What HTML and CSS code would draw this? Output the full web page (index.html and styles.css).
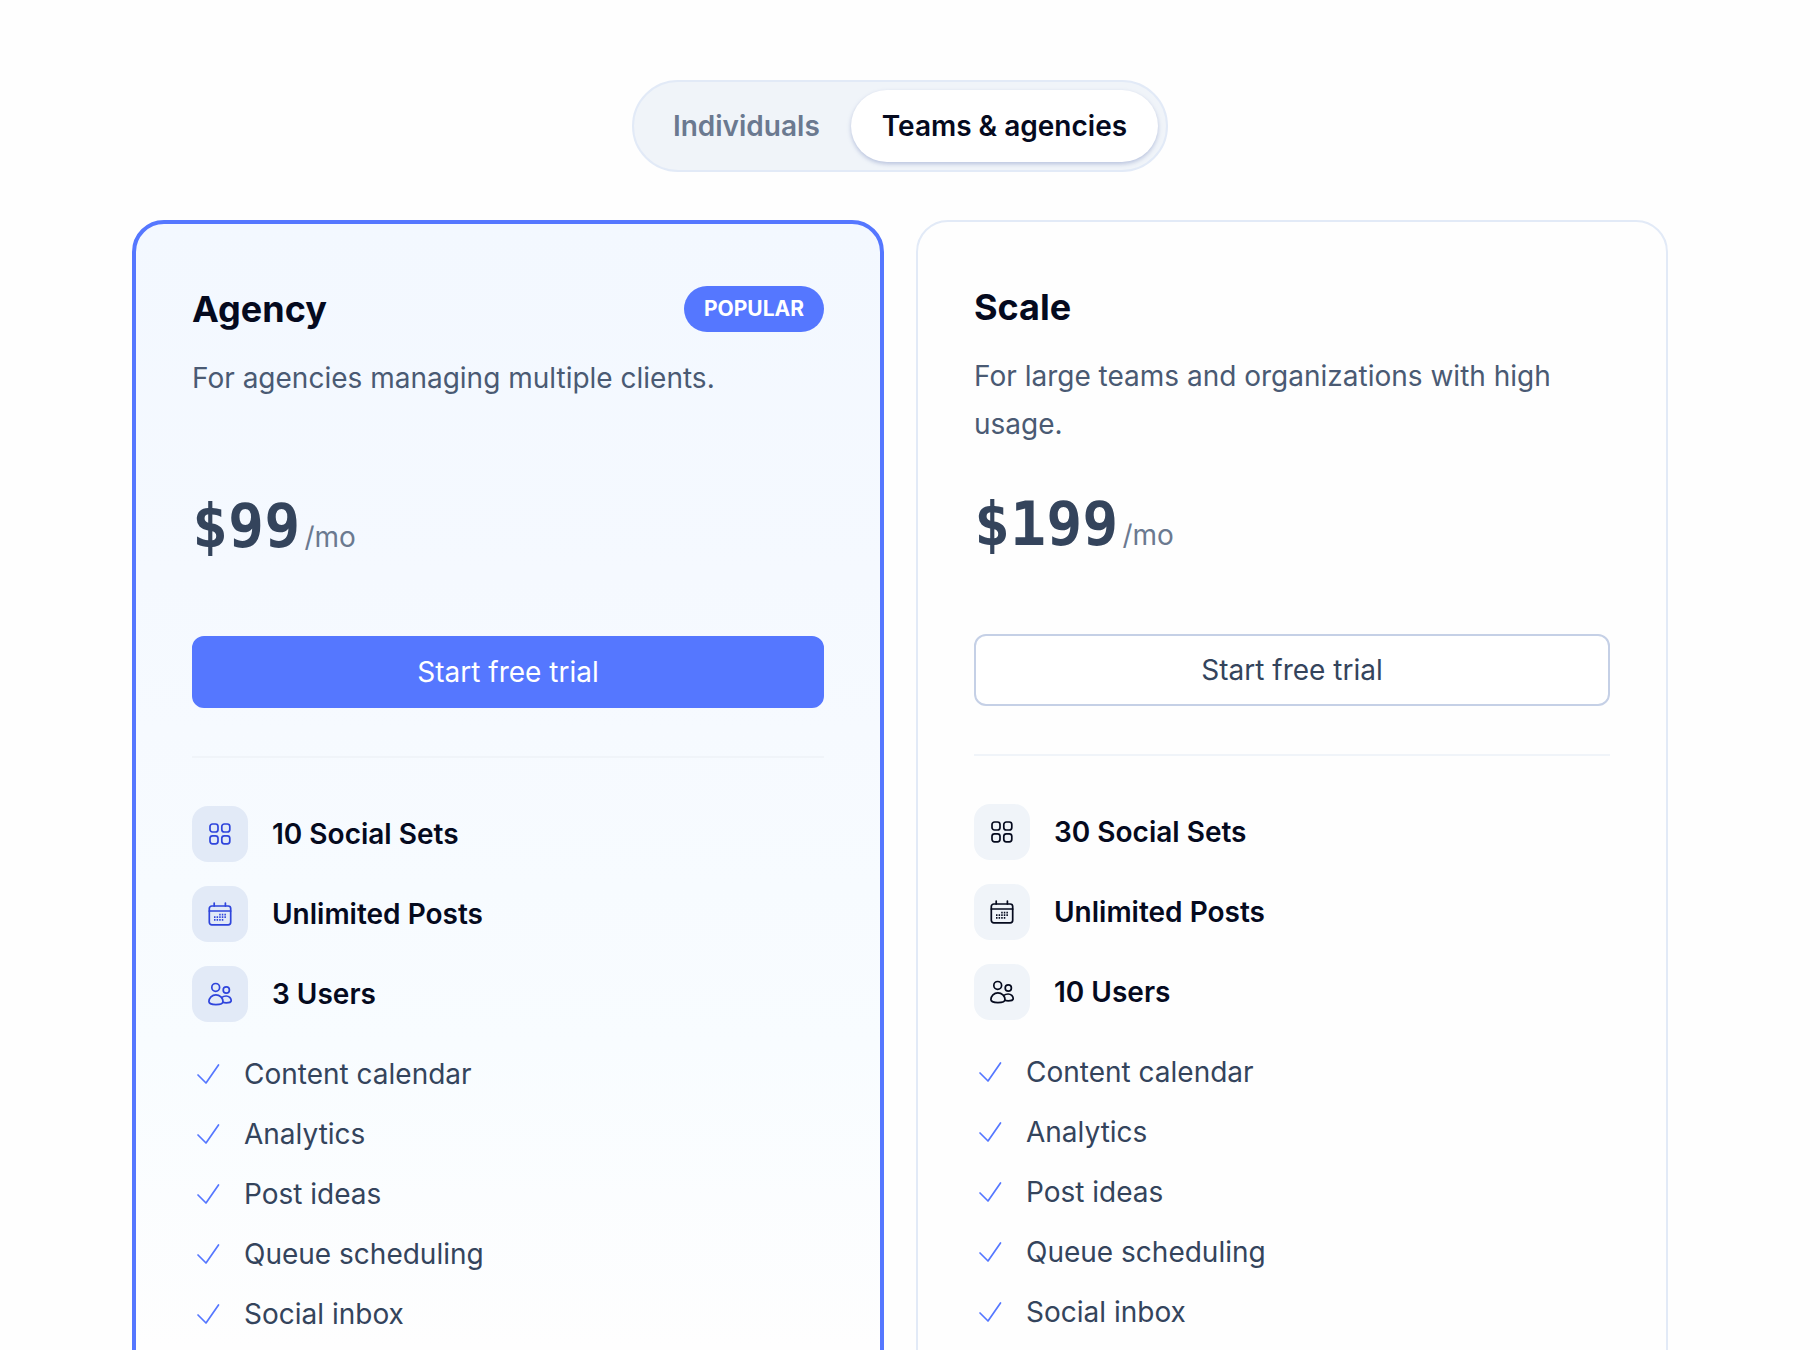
FILE: index.html
```html
<!DOCTYPE html>
<html lang="en">
<head>
    <meta charset="UTF-8">
    <meta name="viewport" content="width=device-width, initial-scale=1.0">
    <title>Pricing</title>
    <link rel="stylesheet" href="styles.css">
</head>
<body>
    <!-- Shared icons -->
    <svg class="sprite" aria-hidden="true">
        <symbol id="icon-grid" viewBox="0 0 24 24">
            <rect x="2" y="2" width="8" height="8" rx="2.5"/>
            <rect x="13.8" y="2" width="8" height="8" rx="2.5"/>
            <rect x="2" y="13.8" width="8" height="8" rx="2.5"/>
            <rect x="13.8" y="13.8" width="8" height="8" rx="2.5"/>
        </symbol>
        <symbol id="icon-calendar" viewBox="0 0 24 24">
            <rect x="1.3" y="4" width="21.4" height="18.8" rx="2.5"/>
            <path d="M1.3 9h21.4M6.2 1v3M17.4 1v3"/>
            <path stroke-linecap="butt" stroke-dasharray="1.5 1.1" d="M11.2 12.6h6.7M6 15.2h11.9M6 17.8h9.3"/>
        </symbol>
        <symbol id="icon-users" viewBox="0 0 24 24">
            <circle cx="7.7" cy="5.4" r="3.9"/>
            <circle cx="18.3" cy="8" r="3.1"/>
            <path d="M.9 19.6C.9 16 4 12.8 7.9 12.8S15 16 15 19.6c0 2-3.4 3.1-7.1 3.1S.9 21.6.9 19.6z"/>
            <path d="M13.8 15.4c1.2-.9 2.7-1.4 4.4-1.4 2.9 0 5 2.4 5 4.6 0 1.6-2.2 2.2-5 2.2-1.4 0-2.6-.2-3.4-.5"/>
        </symbol>
        <symbol id="icon-check" viewBox="0 0 32 32">
            <path d="M6 17l8 8L26.5 7"/>
        </symbol>
    </svg>

    <main class="pricing">
        <div class="toggle">
            <button type="button" class="toggle-btn">Individuals</button>
            <button type="button" class="toggle-btn active">Teams &amp; agencies</button>
        </div>

        <div class="plans">
            <!-- Agency plan -->
            <section class="plan popular">
                <div class="plan-header">
                    <h2>Agency</h2>
                    <span class="badge">POPULAR</span>
                </div>
                <p class="plan-desc">For agencies managing multiple clients.</p>
                <p class="plan-price"><span class="amount">$99</span><span class="period">/mo</span></p>
                <button type="button" class="trial-btn">Start free trial</button>
                <ul class="limits">
                    <li><span class="tile"><svg><use href="#icon-grid"/></svg></span>10 Social Sets</li>
                    <li><span class="tile"><svg><use href="#icon-calendar"/></svg></span>Unlimited Posts</li>
                    <li><span class="tile"><svg><use href="#icon-users"/></svg></span>3 Users</li>
                </ul>
                <ul class="features">
                    <li><svg><use href="#icon-check"/></svg>Content calendar</li>
                    <li><svg><use href="#icon-check"/></svg>Analytics</li>
                    <li><svg><use href="#icon-check"/></svg>Post ideas</li>
                    <li><svg><use href="#icon-check"/></svg>Queue scheduling</li>
                    <li><svg><use href="#icon-check"/></svg>Social inbox</li>
                </ul>
            </section>

            <!-- Scale plan -->
            <section class="plan">
                <div class="plan-header">
                    <h2>Scale</h2>
                </div>
                <p class="plan-desc">For large teams and organizations with high usage.</p>
                <p class="plan-price"><span class="amount">$199</span><span class="period">/mo</span></p>
                <button type="button" class="trial-btn">Start free trial</button>
                <ul class="limits">
                    <li><span class="tile"><svg><use href="#icon-grid"/></svg></span>30 Social Sets</li>
                    <li><span class="tile"><svg><use href="#icon-calendar"/></svg></span>Unlimited Posts</li>
                    <li><span class="tile"><svg><use href="#icon-users"/></svg></span>10 Users</li>
                </ul>
                <ul class="features">
                    <li><svg><use href="#icon-check"/></svg>Content calendar</li>
                    <li><svg><use href="#icon-check"/></svg>Analytics</li>
                    <li><svg><use href="#icon-check"/></svg>Post ideas</li>
                    <li><svg><use href="#icon-check"/></svg>Queue scheduling</li>
                    <li><svg><use href="#icon-check"/></svg>Social inbox</li>
                </ul>
            </section>
        </div>
    </main>
</body>
</html>
```
FILE: styles.css
```css
* {
    box-sizing: border-box;
}

body {
    font-family: Inter, "Liberation Sans", sans-serif;
    font-size: 28px;
    line-height: 48px;
    color: #34445c;
    background: #fefefe;
    margin: 0;
}

h2, p, ul {
    margin: 0;
    padding: 0;
}

ul {
    list-style: none;
}

button {
    font: inherit;
    cursor: pointer;
}

svg {
    fill: none;
    stroke: currentColor;
    stroke-width: 1.7;
    stroke-linecap: round;
    stroke-linejoin: round;
}

.sprite {
    display: none;
}

.pricing {
    display: flex;
    flex-direction: column;
    align-items: center;
    height: 100vh;
    overflow: hidden;
    padding: 80px 20px 0 0;
}

/* Audience switch */
.toggle {
    display: flex;
    flex-shrink: 0;
    padding: 8px;
    border: 2px solid #e2eaf7;
    border-radius: 46px;
    background: #f0f4f9;
}

.toggle-btn {
    height: 72px;
    padding: 0 31px;
    border: none;
    border-radius: 36px;
    background: none;
    color: #6b7990;
    font-weight: 600;
}

.toggle-btn.active {
    background: #fff;
    color: #050a1e;
    box-shadow: 0 2px 4px rgba(100, 120, 180, 0.4);
}

/* Plan cards */
.plans {
    display: grid;
    grid-template-columns: 1fr 1fr;
    gap: 32px;
    width: 100%;
    max-width: 1536px;
    margin-top: 48px;
}

.plan {
    padding: 56px;
    border: 2px solid #e2eaf7;
    border-radius: 32px;
    background: #fefefe;
}

.plan.popular {
    border: 4px solid #5577ff;
    background: linear-gradient(#f3f8ff, #f5f9ff 30%, #f8fcff 70%, #fefefe 96%);
}

.plan-header {
    display: flex;
    justify-content: space-between;
    align-items: center;
    height: 58px;
}

.plan-header h2 {
    font-size: 36px;
    font-weight: 700;
    color: #050a1e;
}

.badge {
    padding: 0 20px;
    border-radius: 23px;
    background: #5577ff;
    color: #fff;
    font-size: 21px;
    line-height: 46px;
    font-weight: 700;
}

.plan-desc {
    min-height: 96px;
    margin-top: 16px;
    color: #4a5a73;
}

.plan-price {
    display: flex;
    align-items: baseline;
    gap: 4px;
    height: 92px;
    margin-top: 36px;
    line-height: 80px;
}

.amount {
    font-family: "DejaVu Sans Mono", monospace;
    font-size: 60px;
    font-weight: 700;
}

.period {
    color: #6b7990;
}

.trial-btn {
    width: 100%;
    height: 72px;
    margin-top: 58px;
    border: 2px solid #c5d0e6;
    border-radius: 12px;
    background: #fff;
    color: #34445c;
}

.popular .trial-btn {
    border-color: #5577ff;
    background: #5577ff;
    color: #fff;
}

.limits {
    display: grid;
    gap: 24px;
    margin-top: 48px;
    padding-top: 48px;
    border-top: 2px solid #f0f4f9;
}

.limits li {
    display: flex;
    align-items: center;
    gap: 24px;
    color: #050a1e;
    font-weight: 600;
}

.tile {
    display: grid;
    place-items: center;
    width: 56px;
    height: 56px;
    border-radius: 16px;
    background: #f0f4f9;
}

.tile svg {
    width: 24px;
    height: 24px;
}

.popular .tile {
    background: #e2eaf7;
    color: #2f45dc;
}

.features {
    display: grid;
    gap: 12px;
    margin-top: 28px;
}

.features li {
    display: flex;
    align-items: center;
    gap: 20px;
}

.features svg {
    width: 32px;
    height: 32px;
    color: #5577ff;
}
```
